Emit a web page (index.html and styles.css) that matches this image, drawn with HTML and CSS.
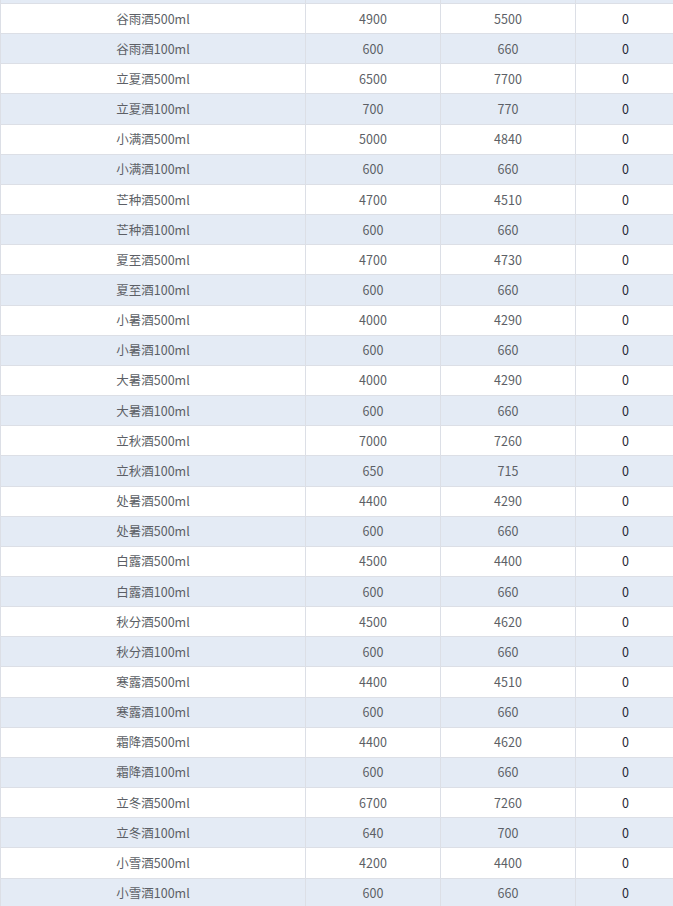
FILE: index.html
```html
<!DOCTYPE html>
<html lang="zh">
<head>
<meta charset="utf-8">
<link rel="stylesheet" href="styles.css">
</head>
<body>
<div class="wrap">
<table class="grid">
<colgroup><col class="c1"><col class="c2"><col class="c3"><col class="c4"></colgroup>
<tbody>
<tr class="stripe"><td></td><td></td><td></td><td class="z"></td></tr>
<tr><td>谷雨酒500ml</td><td>4900</td><td>5500</td><td class="z">0</td></tr>
<tr class="stripe"><td>谷雨酒100ml</td><td>600</td><td>660</td><td class="z">0</td></tr>
<tr><td>立夏酒500ml</td><td>6500</td><td>7700</td><td class="z">0</td></tr>
<tr class="stripe"><td>立夏酒100ml</td><td>700</td><td>770</td><td class="z">0</td></tr>
<tr><td>小满酒500ml</td><td>5000</td><td>4840</td><td class="z">0</td></tr>
<tr class="stripe"><td>小满酒100ml</td><td>600</td><td>660</td><td class="z">0</td></tr>
<tr><td>芒种酒500ml</td><td>4700</td><td>4510</td><td class="z">0</td></tr>
<tr class="stripe"><td>芒种酒100ml</td><td>600</td><td>660</td><td class="z">0</td></tr>
<tr><td>夏至酒500ml</td><td>4700</td><td>4730</td><td class="z">0</td></tr>
<tr class="stripe"><td>夏至酒100ml</td><td>600</td><td>660</td><td class="z">0</td></tr>
<tr><td>小暑酒500ml</td><td>4000</td><td>4290</td><td class="z">0</td></tr>
<tr class="stripe"><td>小暑酒100ml</td><td>600</td><td>660</td><td class="z">0</td></tr>
<tr><td>大暑酒500ml</td><td>4000</td><td>4290</td><td class="z">0</td></tr>
<tr class="stripe"><td>大暑酒100ml</td><td>600</td><td>660</td><td class="z">0</td></tr>
<tr><td>立秋酒500ml</td><td>7000</td><td>7260</td><td class="z">0</td></tr>
<tr class="stripe"><td>立秋酒100ml</td><td>650</td><td>715</td><td class="z">0</td></tr>
<tr><td>处暑酒500ml</td><td>4400</td><td>4290</td><td class="z">0</td></tr>
<tr class="stripe"><td>处暑酒500ml</td><td>600</td><td>660</td><td class="z">0</td></tr>
<tr><td>白露酒500ml</td><td>4500</td><td>4400</td><td class="z">0</td></tr>
<tr class="stripe"><td>白露酒100ml</td><td>600</td><td>660</td><td class="z">0</td></tr>
<tr><td>秋分酒500ml</td><td>4500</td><td>4620</td><td class="z">0</td></tr>
<tr class="stripe"><td>秋分酒100ml</td><td>600</td><td>660</td><td class="z">0</td></tr>
<tr><td>寒露酒500ml</td><td>4400</td><td>4510</td><td class="z">0</td></tr>
<tr class="stripe"><td>寒露酒100ml</td><td>600</td><td>660</td><td class="z">0</td></tr>
<tr><td>霜降酒500ml</td><td>4400</td><td>4620</td><td class="z">0</td></tr>
<tr class="stripe"><td>霜降酒100ml</td><td>600</td><td>660</td><td class="z">0</td></tr>
<tr><td>立冬酒500ml</td><td>6700</td><td>7260</td><td class="z">0</td></tr>
<tr class="stripe"><td>立冬酒100ml</td><td>640</td><td>700</td><td class="z">0</td></tr>
<tr><td>小雪酒500ml</td><td>4200</td><td>4400</td><td class="z">0</td></tr>
<tr class="stripe"><td>小雪酒100ml</td><td>600</td><td>660</td><td class="z">0</td></tr>
</tbody>
</table>
</div>
</body>
</html>
```

FILE: styles.css
```css
html, body {
  margin: 0;
  padding: 0;
  background: #ffffff;
  overflow: hidden;
}
.wrap {
  width: 676px;
  margin-top: -26.17px;
}
.grid {
  width: 676px;
  border-collapse: separate;
  border-spacing: 0;
  table-layout: fixed;
  border-left: 1px solid #dcdfe6;
  font-family: "Microsoft YaHei", "Noto Sans CJK SC", "Noto Sans", sans-serif;
  font-size: 12.5px;
  color: #5c5f66;
}
.c1 { width: 305px; }
.c2 { width: 135px; }
.c3 { width: 135px; }
.c4 { width: 100px; }
.grid td {
  box-sizing: border-box;
  height: 30.17px;
  padding: 0;
  text-align: center;
  vertical-align: middle;
  border-right: 1px solid #dcdfe6;
  border-bottom: 1px solid #dcdfe6;
  line-height: 16px;
}
.grid tr.stripe td {
  background: #e4ebf5;
}
.grid td.z {
  color: #1f2633;
  font-weight: 400;
}
```
